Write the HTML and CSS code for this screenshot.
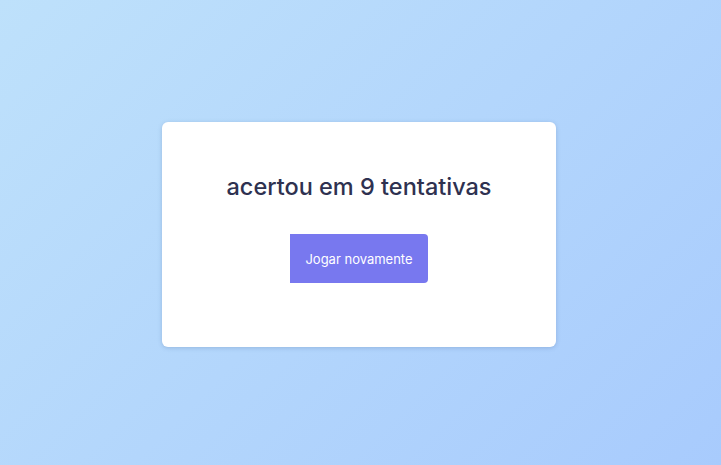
FILE: index.html
```html
<!DOCTYPE html>
<html lang="pt">
<head>
<meta charset="utf-8">
<link rel="stylesheet" href="styles.css">
<title>Resultado</title>
</head>
<body>
<main class="page">
  <section class="card">
    <h1 class="title">acertou em 9 tentativas</h1>
    <button class="btn">Jogar novamente</button>
  </section>
</main>
</body>
</html>
```
FILE: styles.css
```css
* { box-sizing: border-box; }
html, body { margin: 0; height: 100%; }
body {
  font-family: Inter, "Open Sans", sans-serif;
  background: linear-gradient(135deg, #bee1fb 0%, #a8cbfd 100%);
}
.page {
  height: 465px;
  display: flex;
  align-items: flex-start;
  justify-content: center;
  padding-top: 122px;
  padding-right: 3px;
}
.card {
  width: 394px;
  height: 225px;
  background: #fff;
  border-radius: 6px;
  box-shadow: 0 1px 4px rgba(60, 90, 140, 0.25);
  display: flex;
  flex-direction: column;
  align-items: center;
  padding-top: 50px;
}
.title {
  margin: 0;
  font-size: 23.5px;
  font-weight: 500;
  color: #2e3150;
  letter-spacing: 0;
  line-height: 30px;
}
.btn {
  margin-top: 32px;
  width: 138px;
  height: 49px;
  border: none;
  background: #7878ef;
  color: #fff;
  font-family: inherit;
  font-size: 13px;
  border-radius: 0 4px 4px 0;
  cursor: pointer;
}
```
